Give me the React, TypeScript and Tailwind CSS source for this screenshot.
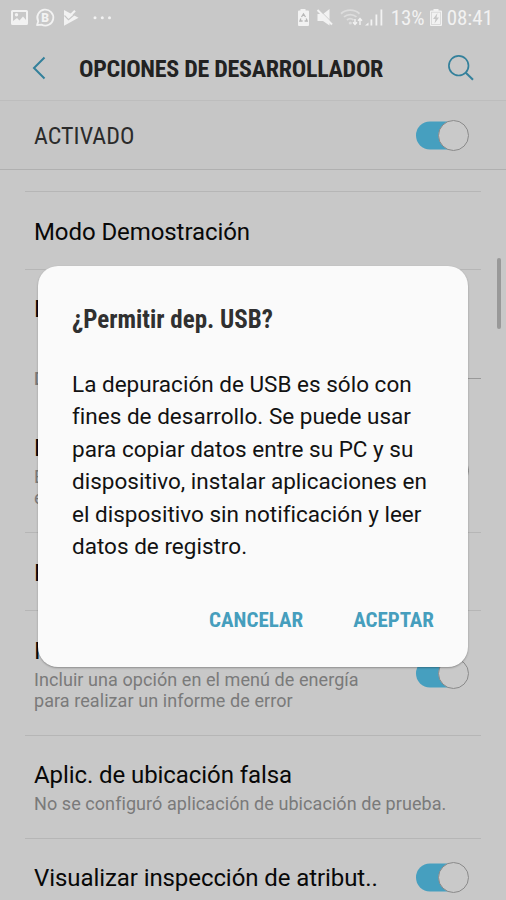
// App.tsx
// Developer options screen with the USB debugging confirmation dialog on top.

import React from 'react';

interface SettingRowProps {
  title: string;
  lines?: string[];
  className: string;
  toggle?: 'on' | 'off';
}

const Toggle: React.FC<{ state: 'on' | 'off' }> = ({ state }) => (
  <svg className="w-[53px] h-[31px] shrink-0" viewBox="0 0 53 31">
    <rect x="0" y="1.5" width="50" height="28" rx="14" fill={state === 'on' ? '#469fbf' : '#a0a0a0'} />
    <circle cx="37.5" cy="15.5" r="15" fill="#c9c9c9" stroke="#8a8a8a" strokeWidth="1" />
  </svg>
);

const SettingRow: React.FC<SettingRowProps> = ({ title, lines = [], className, toggle }) => (
  <div className={`flex items-center justify-between mx-[25px] pl-[9px] pr-3 border-b ${className}`}>
    <div className="whitespace-nowrap">
      <p className="text-[24px] leading-[30px] tracking-[-0.08px] text-[#080808]">{title}</p>
      {lines.length > 0 && (
        <div className="pt-[3px] text-[18px] leading-[21px] tracking-[0.07px] text-[#7a7a7a]">
          {lines.map((line) => <p key={line}>{line}</p>)}
        </div>
      )}
    </div>
    {toggle && <Toggle state={toggle} />}
  </div>
);

// Notification and system icons, drawn in one strip per side
const StatusBar = () => (
  <div className="flex items-center justify-between h-9 pl-[11px] pr-[13px] text-[#f2f2f2]">
    <svg className="w-[104px] h-5" viewBox="0 0 104 20" fill="currentColor">
      {/* picture */}
      <path fillRule="evenodd" d="M1.5 2h14a1.5 1.5 0 0 1 1.5 1.5v12a1.5 1.5 0 0 1-1.5 1.5h-14A1.5 1.5 0 0 1 0 15.5v-12A1.5 1.5 0 0 1 1.5 2zM2 4v9l4-3 2.5 2.5 3.5-4 3 3.5V4zM5.5 5a1.7 1.7 0 1 1 0 3.4a1.7 1.7 0 0 1 0-3.4z" />
      {/* business chat bubble */}
      <path fill="none" stroke="currentColor" strokeWidth="1.8" strokeLinejoin="round" d="M26 17.2l1.2-4A8 8 0 1 1 30.5 16.6z" />
      <text x="30.2" y="13.7" fontSize="12" fontWeight="900" fontFamily="Roboto, sans-serif">B</text>
      {/* play with tick */}
      <path d="M53 2L67.5 9.7L53 17.8z" />
      <path d="M53.5 7.5l4 4.2L66.5 4" fill="none" stroke="#c8c8c8" strokeWidth="1.2" />
      <path d="M54.5 5.5l3.2 3.5L64 2.8" fill="none" stroke="currentColor" strokeWidth="2.2" />
      <circle cx="84" cy="9.7" r="1.5" />
      <circle cx="91.3" cy="9.7" r="1.5" />
      <circle cx="98.5" cy="9.7" r="1.5" />
    </svg>
    <div className="flex items-center">
      <svg className="w-[88px] h-5 mr-[6px]" viewBox="0 0 88 20" fill="currentColor">
        {/* battery with recycle sign */}
        <path d="M3.5 1h5v1.5H11a1 1 0 0 1 1 1V17a1 1 0 0 1-1 1H2a1 1 0 0 1-1-1V3.5a1 1 0 0 1 1-1h1.5z" />
        <path d="M4.5 9l2-3 2 3M9.2 10.5l1 2.5H7.6M5.6 13H2.9l1-2.5" fill="none" stroke="#b8b8b8" strokeWidth="1.3" />
        {/* muted speaker */}
        <path d="M20.5 6H26L32.5 1v16.5L26 13H20.5z" />
        <path d="M22 1.5l14.5 14.5" stroke="#c8c8c8" strokeWidth="1" />
        <path d="M20.5 2l14.5 14.5" stroke="currentColor" strokeWidth="2" />
        {/* wifi */}
        <g fill="none" stroke="currentColor" strokeWidth="1.8" opacity="0.5">
          <path d="M44 5.7a14 14 0 0 1 18.5 0" />
          <path d="M47 8.9a9.5 9.5 0 0 1 12.5 0" />
          <path d="M50 12a5 5 0 0 1 6.5 0" />
        </g>
        <circle cx="53.3" cy="15" r="1.6" opacity="0.5" />
        <path d="M58 11v5M56 14.3l2 2.2 2-2.2M63 17v-6M61 12.800l2-2.200 2 2.200" fill="none" stroke="currentColor" strokeWidth="1.4" />
        {/* signal */}
        <path d="M68 17.5l3.5-3v3zM73.5 11.5h1.8v6h-1.8zM78.5 6.5h1.8v11h-1.8zM83.5 1.5h1.8v16h-1.8z" />
      </svg>
      <span className="w-[35px] text-[21px] leading-5 font-stretch-condensed whitespace-nowrap">13%</span>
      <svg className="w-3 h-5 ml-1 mr-[5px]" viewBox="0 0 12 20" fill="currentColor">
        <path d="M3.5 1h5v1.5H11a1 1 0 0 1 1 1V17a1 1 0 0 1-1 1H1a1 1 0 0 1-1-1V3.5a1 1 0 0 1 1-1h2.5z" />
        <path d="M7.5 5L3 11h2.5L4.5 15.5l4.5-6H6.5z" fill="#c8c8c8" />
        <rect x="1.5" y="4.2" width="9" height="12.3" fill="none" stroke="#d2d2d2" strokeWidth="0.7" />
      </svg>
      <span className="text-[21px] leading-5 font-stretch-condensed whitespace-nowrap">08:41</span>
    </div>
  </div>
);

const Header = () => (
  <div className="flex items-center h-[65px] pl-8 pr-8 border-b border-[#bdbdbd]">
    <svg className="w-[14px] h-6 -mt-px" viewBox="0 0 14 24" fill="none" stroke="#33809b" strokeWidth="2">
      <path d="M12.5 1.5L2 12l10.5 10.5" />
    </svg>
    <h1 className="ml-[33px] pt-px text-[24px] leading-7 font-bold tracking-[-0.28px] text-[#222] font-stretch-condensed whitespace-nowrap">
      OPCIONES DE DESARROLLADOR
    </h1>
    <svg className="w-[26px] h-[26px] ml-auto" viewBox="0 0 26 26" fill="none" stroke="#33809b" strokeWidth="1.7">
      <circle cx="10.7" cy="10.7" r="9.8" />
      <path d="M17.8 17.8l7.2 7" strokeWidth="2" />
    </svg>
  </div>
);

const UsbDialog = () => (
  <div
    className="absolute left-[38px] top-[266px] w-[430px] h-[401px] pt-[39px] px-[34px] rounded-[20px]
               bg-[#fafafa] shadow-[0_1px_2px_rgba(0,0,0,0.3)]"
  >
    <h2 className="text-[25px] leading-[30px] font-bold text-[#303030] font-stretch-condensed whitespace-nowrap">
      ¿Permitir dep. USB?
    </h2>
    <p className="mt-[33px] text-[22.5px] leading-[32.4px] tracking-[0.01px] text-[#121212] whitespace-nowrap">
      La depuración de USB es sólo con<br />
      fines de desarrollo. Se puede usar<br />
      para copiar datos entre su PC y su<br />
      dispositivo, instalar aplicaciones en<br />
      el dispositivo sin notificación y leer<br />
      datos de registro.
    </p>
    <div className="flex justify-end gap-[50px] mt-[44px] text-[21px] leading-7 font-bold text-[#469ebd] font-stretch-condensed">
      <button>CANCELAR</button>
      <button>ACEPTAR</button>
    </div>
  </div>
);

export default function App() {
  return (
    <div
      className="relative w-[506px] h-[900px] overflow-hidden bg-[#c8c8c8]
                 font-['Roboto',sans-serif]"
    >
      <StatusBar />
      <Header />

      {/* Master switch */}
      <div className="flex items-center justify-between h-[69px] pl-[34px] pr-[37px] border-b border-[#b0b0b0] bg-[#c6c6c6]">
        <span className="pt-0.5 text-[24px] leading-7 tracking-[0.05px] text-[#2b2b2b] font-stretch-condensed">ACTIVADO</span>
        <Toggle state="on" />
      </div>

      <div className="h-[22px] mx-[25px] border-b border-[#b6b6b6]" />
      <SettingRow title="Modo Demostración" className="h-[78px] pt-0.5 border-[#b6b6b6]" />
      <SettingRow title="D" className="h-[78px] border-transparent" />

      {/* Section label */}
      <div className="flex items-center gap-3 h-[61px] pl-[34px] pr-[25px]">
        <span className="text-[19px] leading-6 font-medium text-[#7a7a7a] font-stretch-condensed">D</span>
        <div className="flex-1 h-px bg-[#999]" />
      </div>

      <SettingRow title="D" lines={['E', 'e']} className="h-[124px] border-[#b6b6b6]" toggle="off" />
      <SettingRow title="R" className="h-[78px] pt-0.5 border-[#b6b6b6]" />
      <SettingRow
        title="I"
        lines={['Incluir una opción en el menú de energía', 'para realizar un informe de error']}
        className="h-[125px] border-[#b6b6b6]"
        toggle="on"
      />
      <SettingRow
        title="Aplic. de ubicación falsa"
        lines={['No se configuró aplicación de ubicación de prueba.']}
        className="h-[103px] border-[#b6b6b6]"
      />
      <SettingRow title="Visualizar inspección de atribut.." className="h-[78px] border-[#b6b6b6]" toggle="on" />

      {/* Scroll thumb */}
      <div className="absolute left-[497px] top-[258px] w-1 h-[71px] rounded-full bg-[#999]" />

      <UsbDialog />
    </div>
  );
}
